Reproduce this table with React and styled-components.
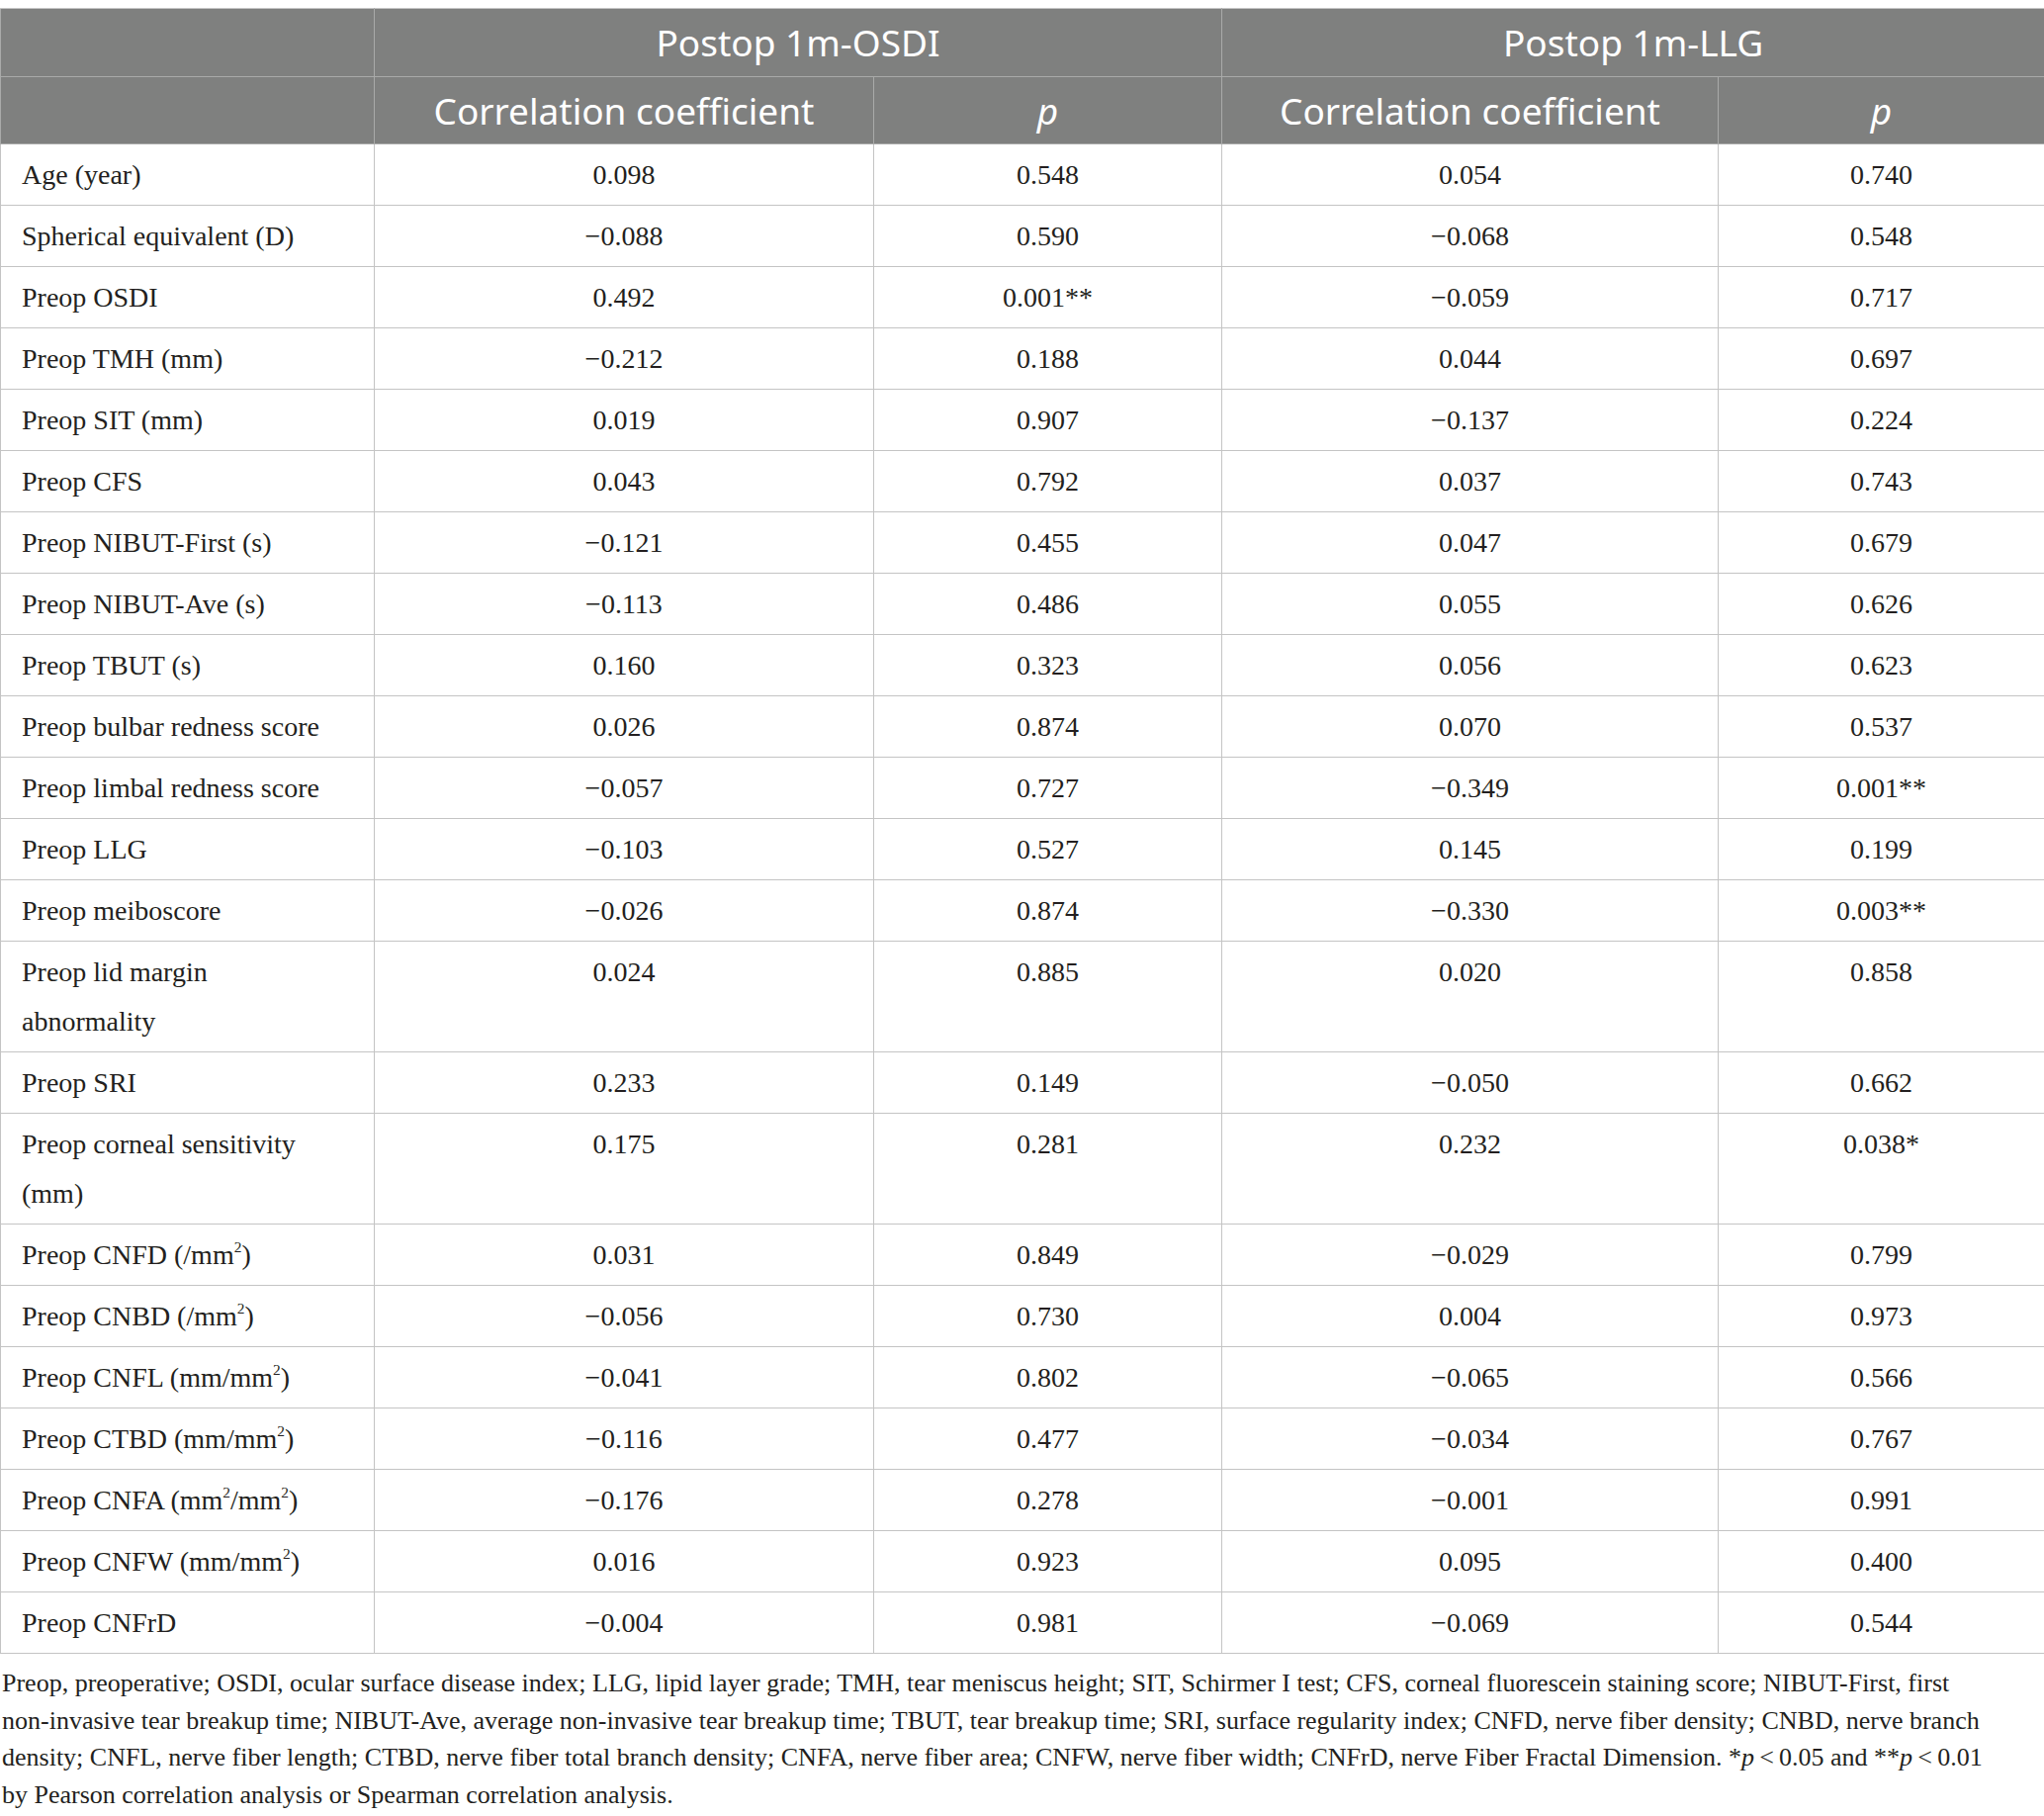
import React from 'react'
import styled, { createGlobalStyle } from 'styled-components'

const GlobalStyle = createGlobalStyle`
  html, body {
    margin: 0;
    padding: 0;
    background: #ffffff;
  }
`

const Page = styled.div`
  width: 2067px;
  padding-top: 8px;
  font-family: "Liberation Serif", "Times New Roman", serif;
  color: #231f20;
`

const Table = styled.table`
  width: 2067px;
  border-collapse: collapse;
  table-layout: fixed;
`

const HeadRow = styled.tr`
  height: ${(props) => props.height}px;
  background: #7f807f;
`

const HeadCell = styled.th`
  border: 1px solid #a9aaa9;
  border-top-color: #c4c4c4;
  font-family: "Noto Sans", "Open Sans", sans-serif;
  font-weight: 400;
  font-size: 37px;
  line-height: 44px;
  color: #ffffff;
  text-align: center;
  vertical-align: middle;
  padding: 0 8px;
  font-style: ${(props) => (props.italic ? 'italic' : 'normal')};
`

const Cell = styled.td`
  border: 1px solid #c4c4c4;
  padding: 6px ${(props) => (props.label ? '21px' : '10px')} 5px;
  font-size: 28px;
  line-height: 50px;
  text-align: ${(props) => (props.label ? 'left' : 'center')};
  vertical-align: top;
  white-space: nowrap;

  sup {
    font-size: 0.55em;
    line-height: 0;
    vertical-align: 0.75em;
  }
`

const Footnote = styled.p`
  margin: 11px 0 0;
  padding: 0 2px;
  font-size: 26px;
  line-height: 37.5px;
  white-space: nowrap;
`

const rows = [
  ['Age (year)', '0.098', '0.548', '0.054', '0.740'],
  ['Spherical equivalent (D)', '−0.088', '0.590', '−0.068', '0.548'],
  ['Preop OSDI', '0.492', '0.001**', '−0.059', '0.717'],
  ['Preop TMH (mm)', '−0.212', '0.188', '0.044', '0.697'],
  ['Preop SIT (mm)', '0.019', '0.907', '−0.137', '0.224'],
  ['Preop CFS', '0.043', '0.792', '0.037', '0.743'],
  ['Preop NIBUT-First (s)', '−0.121', '0.455', '0.047', '0.679'],
  ['Preop NIBUT-Ave (s)', '−0.113', '0.486', '0.055', '0.626'],
  ['Preop TBUT (s)', '0.160', '0.323', '0.056', '0.623'],
  ['Preop bulbar redness score', '0.026', '0.874', '0.070', '0.537'],
  ['Preop limbal redness score', '−0.057', '0.727', '−0.349', '0.001**'],
  ['Preop LLG', '−0.103', '0.527', '0.145', '0.199'],
  ['Preop meiboscore', '−0.026', '0.874', '−0.330', '0.003**'],
  [<>Preop lid margin<br />abnormality</>, '0.024', '0.885', '0.020', '0.858'],
  ['Preop SRI', '0.233', '0.149', '−0.050', '0.662'],
  [<>Preop corneal sensitivity<br />(mm)</>, '0.175', '0.281', '0.232', '0.038*'],
  [<>Preop CNFD (/mm<sup>2</sup>)</>, '0.031', '0.849', '−0.029', '0.799'],
  [<>Preop CNBD (/mm<sup>2</sup>)</>, '−0.056', '0.730', '0.004', '0.973'],
  [<>Preop CNFL (mm/mm<sup>2</sup>)</>, '−0.041', '0.802', '−0.065', '0.566'],
  [<>Preop CTBD (mm/mm<sup>2</sup>)</>, '−0.116', '0.477', '−0.034', '0.767'],
  [<>Preop CNFA (mm<sup>2</sup>/mm<sup>2</sup>)</>, '−0.176', '0.278', '−0.001', '0.991'],
  [<>Preop CNFW (mm/mm<sup>2</sup>)</>, '0.016', '0.923', '0.095', '0.400'],
  ['Preop CNFrD', '−0.004', '0.981', '−0.069', '0.544'],
]

const widths = [378, 505, 352, 502, 330]

export default function App() {
  return (
    <Page>
      <GlobalStyle />
      <Table>
        <colgroup>
          {widths.map((w, i) => (
            <col key={i} style={{ width: w }} />
          ))}
        </colgroup>
        <thead>
          <HeadRow height={69}>
            <HeadCell />
            <HeadCell colSpan={2}>Postop 1m-OSDI</HeadCell>
            <HeadCell colSpan={2}>Postop 1m-LLG</HeadCell>
          </HeadRow>
          <HeadRow height={68}>
            <HeadCell />
            <HeadCell>Correlation coefficient</HeadCell>
            <HeadCell italic>p</HeadCell>
            <HeadCell>Correlation coefficient</HeadCell>
            <HeadCell italic>p</HeadCell>
          </HeadRow>
        </thead>
        <tbody>
          {rows.map((row, i) => (
            <tr key={i}>
              <Cell label>{row[0]}</Cell>
              {row.slice(1).map((v, j) => (
                <Cell key={j}>{v}</Cell>
              ))}
            </tr>
          ))}
        </tbody>
      </Table>
      <Footnote>
        Preop, preoperative; OSDI, ocular surface disease index; LLG, lipid layer grade; TMH, tear meniscus height; SIT, Schirmer I test; CFS, corneal fluorescein staining score; NIBUT-First, first
        <br />
        non-invasive tear breakup time; NIBUT-Ave, average non-invasive tear breakup time; TBUT, tear breakup time; SRI, surface regularity index; CNFD, nerve fiber density; CNBD, nerve branch
        <br />
        density; CNFL, nerve fiber length; CTBD, nerve fiber total branch density; CNFA, nerve fiber area; CNFW, nerve fiber width; CNFrD, nerve Fiber Fractal Dimension. *<i>p</i>{'\u2009'}&lt;{'\u2009'}0.05 and **<i>p</i>{'\u2009'}&lt;{'\u2009'}0.01
        <br />
        by Pearson correlation analysis or Spearman correlation analysis.
      </Footnote>
    </Page>
  )
}
